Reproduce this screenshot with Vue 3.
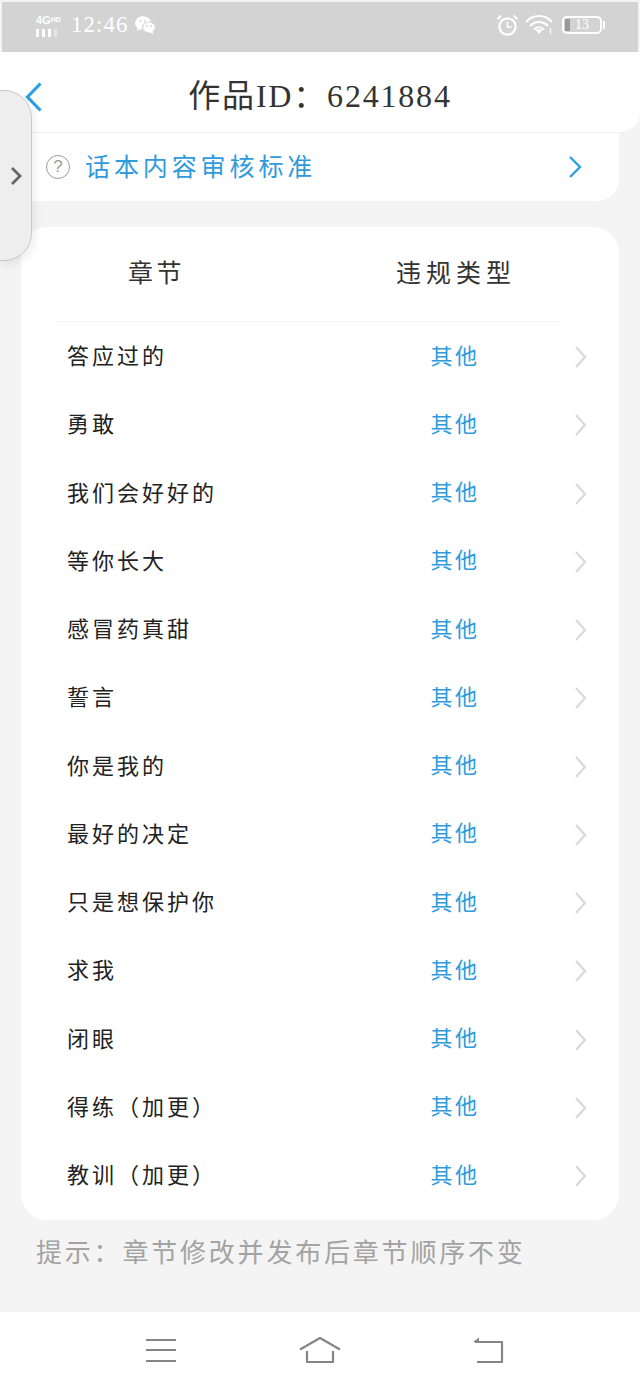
<script setup>
const chapters = [
  '答应过的',
  '勇敢',
  '我们会好好的',
  '等你长大',
  '感冒药真甜',
  '誓言',
  '你是我的',
  '最好的决定',
  '只是想保护你',
  '求我',
  '闭眼',
  '得练（加更）',
  '教训（加更）'
]
</script>

<template>
  <div class="page">
    <div class="status">
      <div class="status-left">
        <div class="signal">
          <span class="net">4G<small>HD</small></span>
          <div class="bars"><i></i><i></i><i></i><i class="off"></i></div>
        </div>
        <span class="time">12:46</span>
        <svg class="wechat" width="21" height="20" viewBox="0 0 21 20">
          <ellipse cx="8" cy="8" rx="8" ry="6.8" fill="#fff" />
          <path d="M3 12l-1 4 4-2.500z" fill="#fff" />
          <ellipse cx="14" cy="12.500" rx="6.500" ry="5.500" fill="#fff" stroke="#d3d3d3" stroke-width="1.200" />
          <path d="M17 16l1.500 3-4-1.500z" fill="#fff" />
          <circle cx="5.500" cy="6" r="1" fill="#d3d3d3" />
          <circle cx="10" cy="6" r="1" fill="#d3d3d3" />
          <circle cx="12" cy="11" r="0.900" fill="#d3d3d3" />
          <circle cx="16" cy="11" r="0.900" fill="#d3d3d3" />
        </svg>
      </div>
      <div class="status-right">
        <svg class="alarm" width="23" height="24" viewBox="0 0 22 23" fill="none" stroke="#fff">
          <circle cx="11" cy="13" r="7.800" stroke-width="2.200" />
          <path d="M11 8.500V13.500H15" stroke-width="1.500" />
          <path d="M1.500 6L5 2.500M20.500 6L17 2.500" stroke-width="2" />
        </svg>
        <svg width="29" height="24" viewBox="0 0 29 22" fill="none" stroke="#fff" stroke-width="2">
          <path d="M1 8C8-0 20-0 27 8" />
          <path d="M5 12C10 6.500 18 6.500 23 12" />
          <path d="M9 15.500C12 12.500 16 12.500 19 15.500" />
          <path d="M10.500 16L14 20L17.500 16C15.500 14.500 12.500 14.500 10.500 16Z" fill="#fff" stroke="none" />
          <path d="M25.500 14V20" stroke-width="1.200" />
        </svg>
        <div class="battery">
          <i class="level"></i>
          <span>13</span>
        </div>
        <i class="battery-tip"></i>
      </div>
    </div>

    <div class="body">
      <header class="title-bar">
        <svg class="back" width="20" height="32" viewBox="0 0 20 32" fill="none" stroke="#2a9fe6" stroke-width="3.200">
          <path d="M16.500 2.500L3.500 16L16.500 29.500" />
        </svg>
        <h1>作品ID：6241884</h1>
      </header>

      <div class="rule-link">
        <span class="help">?</span>
        <span class="rule-text">话本内容审核标准</span>
        <svg class="rule-arrow" width="14" height="24" viewBox="0 0 14 24" fill="none" stroke="#2a9fe6" stroke-width="2.400">
          <path d="M2 2L12 12L2 22" />
        </svg>
      </div>

      <section class="card">
        <div class="grid head">
          <span class="head-name">章节</span>
          <span class="head-type">违规类型</span>
        </div>
        <div class="rows">
          <div v-for="name in chapters" :key="name" class="grid row">
            <span class="name">{{ name }}</span>
            <span class="type">其他</span>
            <svg class="arrow" width="13" height="24" viewBox="0 0 13 24" fill="none" stroke="#d9d9d9" stroke-width="2.200">
              <path d="M2 2L11 12L2 22" />
            </svg>
          </div>
        </div>
      </section>

      <p class="tip">提示：章节修改并发布后章节顺序不变</p>
    </div>

    <nav class="nav">
      <svg width="32" height="26" viewBox="0 0 32 26" fill="none" stroke="#858585" stroke-width="2.200">
        <path d="M1 3H31M1 13H31M1 24H31" />
      </svg>
      <svg class="home" width="44" height="28" viewBox="0 0 44 28" fill="none" stroke="#858585" stroke-width="2.200">
        <path d="M2 13.500L22 2L42 13.500" stroke-linejoin="round" />
        <path d="M9 15V26H35V15" stroke-linejoin="round" />
      </svg>
      <svg width="32" height="28" viewBox="0 0 32 28" fill="none" stroke="#858585" stroke-width="2.200">
        <path d="M3 6H30V26H5" stroke-linejoin="round" />
        <path d="M1 6L7 1.500V6Z" fill="#858585" stroke="none" />
      </svg>
    </nav>

    <div class="side-tab">
      <svg width="12" height="20" viewBox="0 0 12 20" fill="none" stroke="#666" stroke-width="2.800">
        <path d="M2 2L10 10L2 18" />
      </svg>
    </div>
  </div>
</template>

<style scoped>
.page {
  position: relative;
  display: flex;
  flex-direction: column;
  width: 640px;
  height: 1387px;
  overflow: hidden;
  background: #f4f4f4;
  font-family: "Liberation Serif", "Noto Sans CJK SC", serif;
}

.status {
  display: flex;
  justify-content: space-between;
  align-items: center;
  flex: none;
  box-sizing: border-box;
  height: 50px;
  margin: 2px 2px 0;
  padding: 0 34px 4px;
  background: #d3d3d3;
  color: #fff;
}

.status-left,
.status-right {
  display: flex;
  align-items: center;
}

.signal {
  display: flex;
  flex-direction: column;
  width: 27px;
  margin-right: 8px;
}

.net {
  font-family: "Liberation Sans", sans-serif;
  font-size: 11px;
  font-weight: 700;
  line-height: 11px;
}

.net small {
  font-size: 7px;
  vertical-align: 2px;
}

.bars {
  display: flex;
  gap: 3px;
  margin-top: 3px;
}

.bars i {
  width: 3px;
  height: 8px;
  background: #fff;
}

.bars i.off {
  opacity: 0.4;
}

.time {
  margin: 0 7px 1px 0;
  font-size: 23px;
  letter-spacing: 1px;
}

.status-right {
  margin-right: -1px;
}

.status-right svg {
  margin-right: 8px;
}

.status-right .alarm {
  margin-right: 6px;
}

.battery {
  position: relative;
  display: flex;
  justify-content: center;
  align-items: center;
  box-sizing: border-box;
  width: 40px;
  height: 18px;
  border: 2px solid #fff;
  border-radius: 5px;
  font-size: 14px;
}

.level {
  position: absolute;
  left: 1px;
  top: 1px;
  bottom: 1px;
  width: 5px;
  background: #9a9a9a;
}

.battery-tip {
  width: 2px;
  height: 8px;
  margin-left: 1px;
  background: #fff;
}

.body {
  flex: 1;
  display: flex;
  flex-direction: column;
}

.title-bar {
  position: relative;
  display: flex;
  justify-content: center;
  align-items: center;
  height: 80px;
  background: #fff;
  border-bottom: 1px solid #f1f1f1;
  border-bottom-right-radius: 20px;
}

.title-bar h1 {
  margin: 0 0 -2px;
  font-size: 32px;
  font-weight: 400;
  letter-spacing: 1.800px;
  color: #333;
}

.back {
  position: absolute;
  left: 24px;
  top: 29px;
}

.rule-link {
  display: flex;
  align-items: center;
  height: 68px;
  margin-right: 21px;
  padding: 0 37px 0 46px;
  background: #fff;
  border-radius: 0 0 22px 22px;
}

.help {
  display: flex;
  justify-content: center;
  align-items: center;
  box-sizing: border-box;
  width: 24px;
  height: 24px;
  margin-right: 15px;
  border: 1px solid #9a9a9a;
  border-radius: 50%;
  font-family: "Liberation Sans", sans-serif;
  font-size: 17px;
  color: #9a9a9a;
}

.rule-text {
  flex: 1;
  margin-bottom: 5px;
  font-size: 25px;
  letter-spacing: 3.900px;
  color: #2f9bdc;
}

.card {
  margin: 26px 21px 0;
  padding-bottom: 11px;
  background: #fff;
  border-radius: 26px;
}

.grid {
  display: grid;
  grid-template-columns: 374px 120px 1fr;
  align-items: center;
}

.head {
  height: 94px;
  margin: 0 60px 0 34px;
  grid-template-columns: 341px 120px;
  border-bottom: 1px solid #f3f3f3;
}

.head-name {
  margin: 0 0 6px 73px;
  font-size: 25px;
  letter-spacing: 3.500px;
  color: #333;
}

.head-type {
  justify-self: center;
  margin-bottom: 6px;
  font-size: 25px;
  letter-spacing: 5px;
  white-space: nowrap;
  color: #333;
}

.row {
  height: 68.25px;
}

.name {
  margin: 0 0 4px 46px;
  font-size: 22px;
  letter-spacing: 3px;
  color: #222;
}

.type {
  justify-self: center;
  margin-bottom: 5px;
  font-size: 22px;
  letter-spacing: 2.500px;
  color: #2f9bdc;
}

.arrow {
  justify-self: end;
  margin: 2px 32px 0 0;
}

.tip {
  margin: 19px 0 0 36px;
  font-size: 26px;
  line-height: 30px;
  letter-spacing: 2.800px;
  color: #a3a3a3;
}

.nav {
  flex: none;
  display: flex;
  justify-content: space-between;
  align-items: center;
  height: 75px;
  padding: 0 136px 0 145px;
  background: #fff;
}

.home {
  margin: 0 9px 0 0;
}

.side-tab {
  position: absolute;
  left: -2px;
  top: 90px;
  display: flex;
  align-items: center;
  justify-content: flex-end;
  box-sizing: border-box;
  width: 34px;
  height: 171px;
  padding-right: 9px;
  background: #eeeeee;
  border: 1px solid #c8c8c8;
  border-radius: 0 28px 28px 0;
  box-shadow: 2px 4px 10px rgba(0, 0, 0, 0.08);
}
</style>
